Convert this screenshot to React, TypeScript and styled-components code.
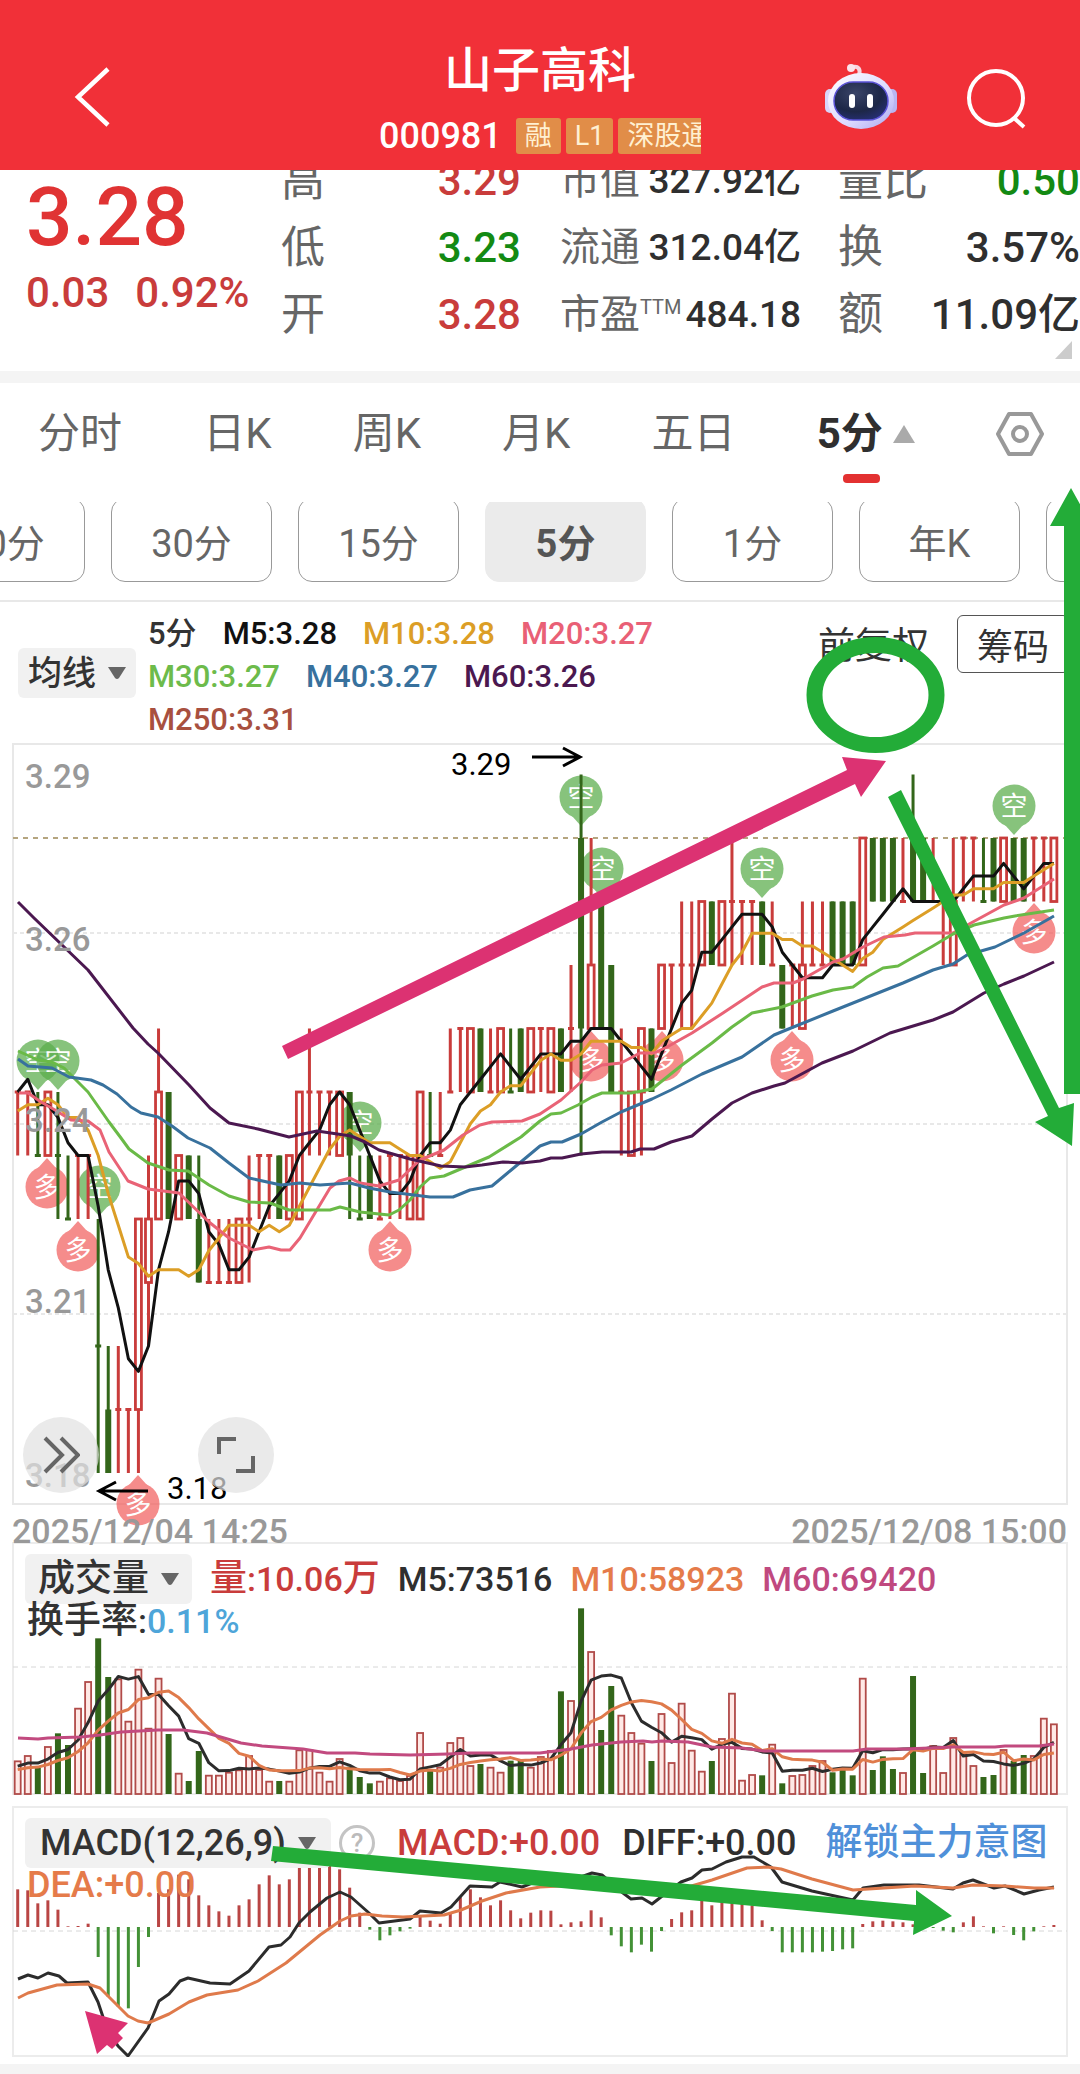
import React from "react";
import styled, { createGlobalStyle } from "styled-components";

const FONT = `Roboto, "Noto Sans CJK SC", sans-serif`;
const RED = "#c93c3b";
const GREEN = "#33661a";
const MARK_GREEN = "#23ac38";
const MARK_PINK = "#dc3272";

const GlobalStyle = createGlobalStyle`
  * { box-sizing: border-box; }
  body { margin: 0; background: #fff; font-family: ${FONT}; color: #333; overflow-x: hidden; }
  button, select { font: inherit; color: inherit; border: 0; padding: 0; margin: 0; background: none; cursor: pointer; }
`;

const Page = styled.div`
  position: relative;
  min-height: 100vh;
  overflow: hidden;
  display: flex;
  flex-direction: column;
  background: #fff;
`;

/* ---------- header ---------- */

const Header = styled.header`
  position: relative;
  z-index: 1;
  height: 170px;
  padding: 42px 52px 0 60px;
  display: grid;
  grid-template-columns: 195px 1fr 203px;
  background: #f13038;
  color: #fff;
`;

const HeaderSide = styled.div<{ $end?: boolean }>`
  display: flex;
  align-items: flex-start;
  justify-content: ${(p) => (p.$end ? "space-between" : "flex-start")};
  padding-top: 20px;
`;

const IconButton = styled.button`
  display: flex;
  align-items: center;
  justify-content: center;
`;

const Heading = styled.div`
  display: flex;
  flex-direction: column;
  align-items: center;
`;

const Title = styled.h1`
  margin: 0;
  font-size: 48px;
  line-height: 58px;
  font-weight: 500;
`;

const CodeLine = styled.div`
  display: flex;
  align-items: center;
  gap: 5px;
  width: 322px;
  margin-top: 12px;
  overflow: hidden;
  white-space: nowrap;
`;

const Code = styled.span`
  margin-right: 9px;
  font-size: 36px;
  line-height: 48px;
  font-weight: 500;
`;

const Tag = styled.span`
  flex: none;
  padding: 0 9px;
  border-radius: 3px;
  background: #e18d48;
  color: #fff0d2;
  font-size: 27px;
  line-height: 36px;
`;

/* ---------- quote ---------- */

const Quote = styled.section`
  position: relative;
  height: 201px;
  display: grid;
  grid-template-columns: 253px 268px 280px 1fr;
  overflow: hidden;
`;

const PriceBlock = styled.div`
  padding-left: 26px;
  color: #e03333;
`;

const Price = styled.div`
  font-size: 82px;
  line-height: 94px;
  font-weight: 500;
`;

const Change = styled.div`
  display: flex;
  gap: 26px;
  margin-top: 4px;
  color: ${RED};
  font-size: 42px;
  line-height: 50px;
  font-weight: 500;
`;

const StatList = styled.dl<{ $pad: number }>`
  margin: -23px 0 0;
  padding-left: ${(p) => p.$pad}px;
`;

const Stat = styled.div`
  height: 67px;
  display: flex;
  align-items: center;
  justify-content: space-between;
  white-space: nowrap;
`;

const StatLabel = styled.dt<{ $size: number }>`
  display: flex;
  color: #666;
  font-size: ${(p) => p.$size}px;
  line-height: 60px;
`;

const StatValue = styled.dd<{ $size: number; $color?: string }>`
  margin: 0;
  color: ${(p) => p.$color || "#2f2f2f"};
  font-size: ${(p) => p.$size}px;
  line-height: 60px;
  font-weight: 500;
`;

const Sup = styled.small`
  font-size: 20px;
  line-height: 44px;
`;

const Corner = styled.svg`
  position: absolute;
  right: 8px;
  bottom: 12px;
`;

const Gap = styled.div`
  height: 12px;
  background: #f4f4f4;
`;

/* ---------- period tabs ---------- */

const Tabs = styled.nav`
  height: 119px;
  padding: 0 36px 0 38px;
  display: flex;
  align-items: flex-start;
  justify-content: space-between;
  color: #666;
  font-size: 42px;
  line-height: 102px;
`;

const Tab = styled.button<{ $active?: boolean }>`
  display: flex;
  align-items: center;
  gap: 10px;
  height: 102px;
  font-weight: ${(p) => (p.$active ? 700 : 400)};
  color: ${(p) => (p.$active ? "#2f2f2f" : "inherit")};
  position: relative;

  &::after {
    content: "";
    display: ${(p) => (p.$active ? "block" : "none")};
    position: absolute;
    left: 26px;
    top: 91px;
    width: 37px;
    height: 9px;
    border-radius: 4px;
    background: #e33131;
  }
`;

const Chips = styled.div`
  height: 100px;
  display: flex;
  gap: 26px;
  overflow: hidden;
  border-bottom: 2px solid #e8e8e8;
`;

const Chip = styled.button<{ $active?: boolean }>`
  flex: none;
  width: 161px;
  height: 84px;
  margin-top: -4px;
  border: 1px solid ${(p) => (p.$active ? "#ebebeb" : "#999")};
  border-radius: 14px;
  background: ${(p) => (p.$active ? "#ebebeb" : "#fff")};
  color: ${(p) => (p.$active ? "#555" : "#666")};
  font-size: 38px;
  font-weight: ${(p) => (p.$active ? 700 : 400)};

  &:first-child { margin-left: -76px; }
`;

/* ---------- indicator bars ---------- */

const Picker = styled.span<{ $size: number; $pad: number }>`
  flex: none;
  display: inline-flex;
  align-items: center;
  gap: 12px;
  height: 50px;
  padding: 0 ${(p) => p.$pad}px;
  border-radius: 6px;
  background: #f1f1f1;
  color: #333;
  font-size: ${(p) => p.$size}px;
  font-weight: 500;

  select {
    appearance: none;
    height: 50px;
    outline: none;
  }
`;

const AverageBar = styled.section`
  height: 141px;
  display: flex;
  align-items: flex-start;
  padding: 10px 11px 0 18px;
`;

const AveragePicker = styled.div`
  padding-top: 36px;
  width: 130px;
`;

const Averages = styled.div`
  width: 550px;
  display: flex;
  flex-wrap: wrap;
  column-gap: 26px;
  font-size: 31px;
  line-height: 43px;
  font-weight: 500;
`;

const AverageActions = styled.div`
  margin-left: auto;
  display: flex;
  align-items: center;
  gap: 28px;
`;

const PlainButton = styled.button`
  font-size: 37px;
  line-height: 58px;
  padding-top: 6px;
`;

const OutlineButton = styled.button`
  width: 112px;
  height: 58px;
  border: 1px solid #555;
  border-radius: 6px;
  font-size: 36px;
`;

const Ink = styled.span<{ $color: string }>`
  color: ${(p) => p.$color};
`;

const Big = styled.span`
  font-size: 37px;
`;

const Panel = styled.section`
  position: relative;
  display: grid;
`;

const Plot = styled.svg`
  grid-area: 1 / 1;
  display: block;
  width: 100%;
  height: auto;
`;

const PanelLegend = styled.div<{ $size: number; $gap: number }>`
  grid-area: 1 / 1;
  position: relative;
  align-self: start;
  display: flex;
  flex-wrap: wrap;
  align-items: center;
  column-gap: ${(p) => p.$gap}px;
  padding: 12px 12px 0 25px;
  font-size: ${(p) => p.$size}px;
  line-height: 50px;
  font-weight: 500;
  white-space: nowrap;
`;

const SecondLine = styled.div`
  flex-basis: 100%;
  line-height: 34px;
  padding-left: 2px;
`;

const Help = styled.button`
  width: 36px;
  height: 36px;
  margin-left: -14px;
  border: 3px solid #c4c4c4;
  border-radius: 50%;
  color: #bbb;
  font-size: 26px;
  line-height: 30px;
`;

const Unlock = styled.a`
  margin-left: 7px;
  color: #4f90d9;
  font-size: 37px;
  text-decoration: none;
`;

const RoundButton = styled.button<{ $left: number }>`
  position: absolute;
  left: ${(p) => p.$left}px;
  bottom: 49px;
  width: 76px;
  height: 76px;
  border-radius: 50%;
  background: rgba(225, 225, 225, 0.7);
  display: flex;
  align-items: center;
  justify-content: center;
`;

const Footer = styled.div`
  flex: 1;
  min-height: 10px;
  margin-top: 7px;
  background: #f4f4f4;
`;

const Drawings = styled.svg`
  position: absolute;
  z-index: 2;
  left: 0;
  top: 0;
  width: 100%;
  pointer-events: none;
`;

/* ---------- data ---------- */

const barX = (i: number) => 17.7 + 10.06 * i;
const levelY = (k: number) => 774.5 + 63.5 * k;

// kind (r hollow / g solid / t red tick / u green tick), then body top, body bottom, high, low; levels in hex, counted down from 3.29
type Candle = [string, number, number, number, number];
const CANDLES: Candle[] = (
  "t5556 t5556 u6656 r5656 u6657 u7767 t6667 t6667 u997B gAB9B " +
  "tAA9B tAAAB r7A7B r7869 r5747 g5757 r6767 g6767 g7868 t8878 " +
  "t8878 t8878 r7878 t7768 t6667 t6667 g6767 r6767 r5757 t5546 " +
  "t5556 t5556 r5656 g5657 u7767 g6767 t7767 t6667 t6667 r6767 " +
  "r5757 u6656 t6656 t5545 t4445 r4545 g4545 t5545 r4545 u5545 " +
  "g4545 r4545 t4445 r4545 g4545 t4435 g1406 r3414 g2424 g3535 " +
  "t5546 r5656 r4546 g4545 r3434 t3334 t3324 t3324 r2323 g2323 " +
  "r2323 t2213 t2223 t2223 g2323 t3323 g3434 t3334 r3424 t3323 " +
  "t3323 g2323 g2323 g2323 r1313 g1212 g1212 g1212 t2212 g1202 " +
  "g1212 t2212 t2223 r2313 t1112 t1112 u2212 g1212 r1212 g1212 " +
  "g1212 t1112 t1112 r1212"
)
  .split(" ")
  .map((c) => {
    const n = (k: number) => parseInt(c[k], 16);
    return [c[0], n(1), n(2), n(3), n(4)];
  });

const close = (c: Candle) => (c[0] === "r" ? c[1] : c[2]);

const VOLUME_TOPS = [
  661, 645, 684, 618, 580, 615, 503, 423, 295, 411, 415, 542, 386, 563, 413, 582, 698, 723, 633, 704,
  704, 695, 688, 645, 687, 722, 723, 722, 628, 628, 695, 722, 654, 680, 711, 730, 722, 712, 720, 705,
  576, 690, 680, 606, 591, 675, 672, 680, 695, 662, 660, 680, 648, 630, 454, 480, 205, 333, 570, 438,
  524, 576, 608, 663, 519, 666, 488, 629, 692, 663, 594, 458, 719, 702, 706, 611, 730, 705, 702, 675,
  660, 697, 685, 706, 413, 690, 649, 687, 696, 408, 699, 615, 696, 591, 640, 675, 711, 705, 627, 663,
  645, 645, 533, 550,
];
const VOLUMES = VOLUME_TOPS.map((t) => (762 - t) / 3);

const MACD = [
  267, 270, 309, 300, 328, 378, 377, 370, 470, 590, 620, 624, 500, 410, 278, 267, 223, 237, 285, 315,
  333, 346, 315, 297, 252, 225, 252, 237, 198, 185, 180, 190, 207, 262, 337, 388, 420, 405, 393, 385,
  350, 361, 370, 337, 291, 267, 291, 315, 300, 330, 354, 337, 330, 331, 372, 366, 363, 330, 351, 405,
  438, 456, 433, 454, 392, 356, 336, 330, 300, 315, 300, 305, 305, 315, 360, 392, 456, 456, 456, 456,
  454, 452, 447, 444, 371, 363, 361, 363, 366, 372, 378, 383, 391, 396, 366, 348, 378, 399, 378, 404,
  420, 393, 378, 374,
].map((v) => (380 - v) / 3);

function average(values: number[], seed: number[], n: number, toY: (v: number) => number) {
  const all = [...seed, ...values];
  return values
    .map((_, i) => {
      const end = seed.length + i + 1;
      const part = all.slice(end - n, end);
      return `${barX(i).toFixed(1)},${toY(part.reduce((a, b) => a + b, 0) / n).toFixed(1)}`;
    })
    .join(" ");
}

const CLOSES = CANDLES.map(close);
const CLOSE_SEED = [6, 6, 6, 5, 5, 6, 4, 5, 5];
const MA5 = average(CLOSES, CLOSE_SEED, 5, levelY);
const MA10 = average(CLOSES, CLOSE_SEED, 10, levelY);
const MA20 =
  "19,1093 28,1093 41,1102 55,1110 71,1120 88,1121 100,1130 109,1152 128,1181 148,1189 179,1193 209,1222 229,1238 253,1250 269,1247 281,1250 290,1250 300,1238 330,1188 339,1181 350,1178 360,1183 379,1186 399,1180 420,1160 444,1150 463,1135 480,1125 492,1122 522,1121 540,1114 561,1100 581,1082 592,1070 602,1065 621,1063 640,1053 654,1053 667,1047 692,1033 723,1013 747,997 762,987 774,983 793,983 803,979 833,962 843,959 863,947 884,937 905,935 915,933 953,933 971,923 1004,905 1024,898 1054,879";
const MA30 =
  "18,1051 38,1060 52,1062 64,1068 88,1092 109,1122 121,1138 129,1149 148,1163 169,1170 188,1171 209,1185 229,1196 249,1202 270,1203 289,1210 330,1210 340,1207 360,1212 389,1215 399,1210 410,1200 420,1187 430,1178 444,1176 470,1165 489,1157 521,1137 540,1121 551,1114 561,1113 578,1105 592,1097 602,1093 631,1093 652,1089 682,1065 712,1043 732,1027 752,1013 782,1007 812,996 833,990 853,987 867,977 883,968 898,966 933,946 953,934 974,925 1004,918 1015,916 1054,910";
const MA40 =
  "18,1059 28,1066 52,1068 69,1077 91,1080 103,1085 117,1094 131,1107 141,1113 158,1117 172,1126 188,1138 210,1148 229,1163 249,1178 281,1185 300,1183 320,1185 350,1183 369,1188 390,1192 430,1197 453,1197 470,1190 492,1186 510,1171 540,1146 551,1142 562,1142 581,1134 602,1122 621,1112 652,1099 671,1090 702,1074 742,1057 774,1035 791,1028 833,1011 853,1003 903,983 933,970 953,964 967,955 995,947 1024,933 1054,916";
const MA60 =
  "18,902 34,918 88,970 133,1028 148,1044 158,1053 189,1085 210,1108 229,1123 258,1129 289,1137 317,1131 351,1136 365,1142 379,1150 410,1159 441,1166 465,1167 482,1165 503,1162 522,1163 540,1161 551,1158 562,1158 581,1154 602,1152 631,1152 640,1149 654,1149 671,1142 692,1136 712,1119 732,1103 752,1093 774,1086 785,1083 822,1063 853,1051 890,1033 933,1020 953,1012 984,993 1004,984 1024,976 1054,962";

const volY = (v: number) => 1794 - v;
const VOL_SEED = [20, 20, 22, 20, 22, 24, 26, 28, 28];
const VMA5 = average(VOLUMES, VOL_SEED, 5, volY);
const VMA10 = average(VOLUMES, VOL_SEED, 10, volY);
const VMA60 =
  "18,1738 38,1739 48,1738 81,1737 100,1735 121,1732 158,1730 183,1730 207,1733 241,1743 262,1746 303,1749 327,1753 355,1753 370,1754 410,1755 448,1754 470,1753 540,1753 571,1749 592,1745 621,1742 643,1741 652,1742 662,1741 688,1742 712,1747 742,1748 764,1751 853,1751 867,1749 905,1749 953,1747 995,1747 1005,1746 1039,1746 1054,1744";

const DIFF =
  "18,1979 28,1975 38,1978 48,1973 59,1976 67,1983 88,1982 93,1992 98,2002 103,2017 110,2033 118,2046 128,2056 148,2028 159,2001 169,1994 180,1981 188,1978 210,1983 230,1984 249,1971 269,1947 281,1945 290,1937 299,1923 310,1912 327,1898 340,1892 351,1897 369,1913 379,1923 410,1919 420,1911 441,1913 451,1907 470,1886 492,1887 500,1882 522,1887 540,1880 561,1880 578,1878 592,1873 602,1875 623,1893 631,1899 642,1898 652,1904 661,1897 681,1882 692,1878 702,1870 712,1869 726,1862 742,1857 754,1857 771,1867 782,1882 812,1891 853,1900 863,1888 884,1885 919,1885 953,1889 963,1883 973,1880 994,1888 1005,1886 1024,1894 1039,1890 1054,1887";
const DEA =
  "18,1998 28,1993 57,1985 88,1984 100,1988 128,2016 138,2021 148,2023 169,2014 189,2002 207,1995 238,1990 258,1981 286,1963 320,1935 340,1921 351,1916 365,1914 382,1916 403,1917 444,1915 461,1910 482,1901 506,1893 540,1887 581,1885 643,1890 688,1887 712,1880 747,1868 767,1867 781,1869 812,1879 853,1890 884,1888 915,1886 953,1888 973,1885 1005,1886 1034,1888 1054,1888";

const SHORTS: [number, number][] = [[38, 1061], [58, 1061], [99, 1187], [360, 1123], [581, 797], [602, 869], [762, 869], [1014, 806]];
const LONGS: [number, number][] = [[47, 1187], [78, 1250], [138, 1504], [390, 1250], [591, 1060], [662, 1060], [792, 1060], [1034, 932]];

/* ---------- drawings ---------- */

const Down = () => (
  <svg width="18" height="13" viewBox="0 0 18 13" aria-hidden="true"><path d="M0 0H18L11 11Q9 13 7 11Z" fill="#666" /></svg>
);

function Marker({ x, y, up }: { x: number; y: number; up?: boolean }) {
  const tip = up ? `M${x - 9} ${y - 19}L${x} ${y - 29}L${x + 9} ${y - 19}Z` : `M${x - 9} ${y + 19}L${x} ${y + 29}L${x + 9} ${y + 19}Z`;
  return (
    <g fill={up ? "#f2605f" : "#5aad4b"} opacity="0.72">
      <circle cx={x} cy={y} r="21.5" />
      <path d={tip} />
      <text x={x} y={y + 10} fontSize="27" fill="#fff" textAnchor="middle">{up ? "多" : "空"}</text>
    </g>
  );
}

function CandleMark({ c, i }: { c: Candle; i: number }) {
  const [kind, top, bottom, high, low] = c;
  const x = barX(i);
  const color = kind === "g" || kind === "u" ? GREEN : RED;
  const a = levelY(top);
  const b = levelY(bottom);
  return (
    <g stroke={color} fill={color} strokeWidth="3">
      {kind === "r" ? (
        <>
          {high < top && <path d={`M${x} ${levelY(high)}V${a}`} />}
          {low > bottom && <path d={`M${x} ${b}V${levelY(low)}`} />}
          <rect x={x - 3} y={a} width="6" height={b - a} fill="#fff" strokeWidth="2.8" />
        </>
      ) : kind === "g" ? (
        <>
          <path d={`M${x} ${levelY(high)}V${levelY(low)}`} />
          <rect x={x - 3} y={a} width="6" height={b - a} stroke="none" />
        </>
      ) : (
        <path d={`M${x} ${levelY(high)}V${levelY(low)}M${x - 3} ${a}H${x + 3}`} />
      )}
    </g>
  );
}

function Line({ points, color }: { points: string; color: string }) {
  return <polyline points={points} fill="none" stroke={color} strokeWidth="3" strokeLinejoin="round" />;
}

const PriceChart = () => (
  <Plot viewBox="0 743 1080 799" fontFamily={FONT}>
    <g fill="none" stroke="#e8e8e8" strokeWidth="2">
      <path d="M13 744H1067V1504H13Z" />
      <path d="M13 933H1067M13 1124H1067M13 1314H1067" strokeDasharray="4 3" />
    </g>
    <path d="M13 838H1064" stroke="#b5a57f" strokeWidth="2" strokeDasharray="5 5" />
    {SHORTS.map(([x, y]) => <Marker key={`${x}`} x={x} y={y} />)}
    {LONGS.map(([x, y]) => <Marker key={`${x}`} x={x} y={y} up />)}
    {CANDLES.map((c, i) => <CandleMark key={i} c={c} i={i} />)}
    <Line points={MA5} color="#111" />
    <Line points={MA10} color="#dc9e26" />
    <Line points={MA20} color="#e96376" />
    <Line points={MA30} color="#6aba47" />
    <Line points={MA40} color="#38719d" />
    <Line points={MA60} color="#4b1850" />
    <g fill="#999" fontSize="33" fontWeight="500">
      <text x="25" y="788">3.29</text>
      <text x="25" y="951">3.26</text>
      <text x="25" y="1132">3.24</text>
      <text x="25" y="1313">3.21</text>
      <text x="25" y="1487">3.18</text>
    </g>
    <g fill="#000" fontSize="31">
      <text x="451" y="775">3.29</text>
      <text x="167" y="1499">3.18</text>
    </g>
    <g fill="none" stroke="#000" strokeWidth="3">
      <path d="M532 757H580M563 748L580 757L563 766" />
      <path d="M148 1491H99M116 1482L99 1491L116 1500" />
    </g>
  </Plot>
);

const DateRow = styled.div`
  position: absolute;
  z-index: 1;
  left: 12px;
  right: 13px;
  bottom: -9px;
  display: flex;
  justify-content: space-between;
  color: #999;
  font-size: 34px;
  line-height: 40px;
  font-weight: 500;
`;

const VolumeChart = () => (
  <Plot viewBox="0 1542 1080 264">
    <path d="M13 1543H1067V1794H13Z" fill="none" stroke="#ececec" strokeWidth="2" />
    <path d="M13 1667H1067" stroke="#d6d6d6" strokeWidth="1" strokeDasharray="5 4" />
    {VOLUMES.map((v, i) => {
      const green = "gu".includes(CANDLES[i][0]);
      return green ? (
        <rect key={i} x={barX(i) - 3} y={volY(v)} width="6" height={v} fill={GREEN} />
      ) : (
        <rect key={i} x={barX(i) - 3} y={volY(v) + 1} width="6" height={v - 1} fill="#ffe9e6" stroke="#b14b49" strokeWidth="1.8" />
      );
    })}
    <Line points={VMA5} color="#2c2c2c" />
    <Line points={VMA10} color="#df7a4b" />
    <Line points={VMA60} color="#c24a7f" />
  </Plot>
);

const MacdChart = () => (
  <Plot viewBox="0 1806 1080 251">
    <path d="M13 1807H1067V2056H13Z" fill="none" stroke="#ececec" strokeWidth="2" />
    <path d="M13 1931H1067" stroke="#d6d6d6" strokeWidth="1" strokeDasharray="5 4" />
    {MACD.map((v, i) => (
      <path key={i} d={`M${barX(i)} 1927V${1927 - v}`} stroke={v > 0 ? "#b94544" : "#439136"} strokeWidth="3" />
    ))}
    <Line points={DIFF} color="#2c2c2c" />
    <Line points={DEA} color="#df7a4b" />
  </Plot>
);

const Robot = () => (
  <svg width="72" height="68" viewBox="0 0 72 68" aria-hidden="true">
    <defs>
      <linearGradient id="shell" x1="0" y1="0" x2="1" y2="1">
        <stop offset="0" stopColor="#ffffff" />
        <stop offset="0.6" stopColor="#dcd9ff" />
        <stop offset="1" stopColor="#a9a6ee" />
      </linearGradient>
      <radialGradient id="face" cx="0.4" cy="0.3" r="0.8">
        <stop offset="0" stopColor="#3a4468" />
        <stop offset="0.6" stopColor="#1d2747" />
        <stop offset="1" stopColor="#27307a" />
      </radialGradient>
    </defs>
    <path d="M34 13C36 7 33 4 28 5" fill="none" stroke="#f7d7e2" strokeWidth="4" strokeLinecap="round" />
    <circle cx="26" cy="6" r="4" fill="#fbe4ec" />
    <rect x="0" y="27" width="10" height="24" rx="5" fill="#d9d5fa" />
    <rect x="62" y="27" width="10" height="24" rx="5" fill="#b9b5f2" />
    <ellipse cx="36" cy="39" rx="33" ry="28" fill="url(#shell)" />
    <rect x="9" y="20" width="54" height="38" rx="19" fill="url(#face)" stroke="#5a52d6" strokeWidth="1.5" />
    <rect x="24" y="32" width="6" height="14" rx="3" fill="#fff" />
    <rect x="42" y="32" width="6" height="14" rx="3" fill="#fff" />
  </svg>
);

function Annotations() {
  return (
    <Drawings viewBox="0 0 1080 2074" aria-hidden="true">
      <ellipse cx="875.5" cy="695" rx="61" ry="50" fill="none" stroke={MARK_GREEN} strokeWidth="16" />
      <polygon points="282,1046 847,770 842,757 886,761 861,797 855,784 288,1059" fill={MARK_PINK} />
      <polygon points="888,797 901,790 1059,1108 1074,1103 1072,1146 1035,1122 1048,1116" fill={MARK_GREEN} />
      <polygon points="1071,488 1092,526 1080,526 1080,1094 1064,1094 1064,526 1050,526" fill={MARK_GREEN} />
      <polygon points="273,1846 916,1905 916,1890 952,1916 913,1935 914,1921 271,1861" fill={MARK_GREEN} />
      <polygon points="85,2011 128,2023 118,2033 123,2038 112,2049 107,2045 97,2054" fill={MARK_PINK} />
    </Drawings>
  );
}

type Row = { label: React.ReactNode; value: string; color?: string };

function Stats({ rows, label, value, pad }: { rows: Row[]; label: number; value: number; pad: number }) {
  return (
    <StatList $pad={pad}>
      {rows.map((r) => (
        <Stat key={r.value}>
          <StatLabel $size={label}>{r.label}</StatLabel>
          <StatValue $size={value} $color={r.color}>{r.value}</StatValue>
        </Stat>
      ))}
    </StatList>
  );
}

function Choice({ name, value, size, pad }: { name: string; value: string; size: number; pad: number }) {
  return (
    <Picker $size={size} $pad={pad}>
      <select aria-label={name} defaultValue={value}>
        <option>{value}</option>
      </select>
      <Down />
    </Picker>
  );
}

const AVERAGES: [string, string][] = [
  ["5分", "#333"],
  ["M5:3.28", "#111"],
  ["M10:3.28", "#dc9e26"],
  ["M20:3.27", "#e96076"],
  ["M30:3.27", "#6dbb4b"],
  ["M40:3.27", "#38719d"],
  ["M60:3.26", "#4b1850"],
  ["M250:3.31", "#a8503f"],
];

export default function App() {
  return (
    <Page>
      <GlobalStyle />
      <Header>
        <HeaderSide>
          <IconButton aria-label="返回">
            <svg width="64" height="70" viewBox="0 0 64 70" fill="none" stroke="#fff" strokeWidth="4.5">
              <path d="M48 7L18 35L48 63" />
            </svg>
          </IconButton>
        </HeaderSide>
        <Heading>
          <Title>山子高科</Title>
          <CodeLine>
            <Code>000981</Code>
            <Tag>融</Tag>
            <Tag>L1</Tag>
            <Tag>深股通</Tag>
          </CodeLine>
        </Heading>
        <HeaderSide $end>
          <IconButton aria-label="助手"><Robot /></IconButton>
          <IconButton aria-label="搜索">
            <svg width="64" height="74" viewBox="0 0 64 74" fill="none" stroke="#fff" strokeWidth="4">
              <circle cx="32" cy="36" r="27" />
              <path d="M50 56L60 65" />
            </svg>
          </IconButton>
        </HeaderSide>
      </Header>

      <Quote>
        <PriceBlock>
          <Price>3.28</Price>
          <Change><span>0.03</span><span>0.92%</span></Change>
        </PriceBlock>
        <Stats
          pad={28} label={44} value={42}
          rows={[
            { label: "高", value: "3.29", color: RED },
            { label: "低", value: "3.23", color: "#138a13" },
            { label: "开", value: "3.28", color: RED },
          ]}
        />
        <Stats
          pad={39} label={40} value={37}
          rows={[
            { label: "市值", value: "327.92亿" },
            { label: "流通", value: "312.04亿" },
            { label: <>市盈<Sup>TTM</Sup></>, value: "484.18" },
          ]}
        />
        <Stats
          pad={37} label={45} value={42}
          rows={[
            { label: "量比", value: "0.50", color: "#138a13" },
            { label: "换", value: "3.57%" },
            { label: "额", value: "11.09亿" },
          ]}
        />
        <Corner width="17" height="18" viewBox="0 0 17 18" aria-hidden="true"><path d="M17 0V18H0Z" fill="#ccc" /></Corner>
      </Quote>
      <Gap />

      <Tabs>
        <Tab>分时</Tab>
        <Tab>日K</Tab>
        <Tab>周K</Tab>
        <Tab>月K</Tab>
        <Tab>五日</Tab>
        <Tab $active>
          5分
          <svg width="22" height="18" viewBox="0 0 22 18" aria-hidden="true"><path d="M11 0L22 18H0Z" fill="#aaa" /></svg>
        </Tab>
        <Tab aria-label="设置">
          <svg width="48" height="46" viewBox="0 0 48 46" fill="none" stroke="#999" strokeWidth="4" strokeLinejoin="round">
            <path d="M13 3H35L46 23L35 43H13L2 23Z" />
            <circle cx="24" cy="23" r="7" />
          </svg>
        </Tab>
      </Tabs>
      <Chips>
        <Chip>60分</Chip>
        <Chip>30分</Chip>
        <Chip>15分</Chip>
        <Chip $active>5分</Chip>
        <Chip>1分</Chip>
        <Chip>年K</Chip>
        <Chip aria-label="更多" />
      </Chips>

      <AverageBar>
        <AveragePicker><Choice name="均线" value="均线" size={34} pad={10} /></AveragePicker>
        <Averages>
          {AVERAGES.map(([t, c]) => <Ink key={t} $color={c}>{t}</Ink>)}
        </Averages>
        <AverageActions>
          <PlainButton>前复权</PlainButton>
          <OutlineButton>筹码</OutlineButton>
        </AverageActions>
      </AverageBar>

      <Panel>
        <PriceChart />
        <RoundButton $left={23} aria-label="展开">
          <svg width="38" height="38" viewBox="0 0 38 38" fill="none" stroke="#666" strokeWidth="4">
            <path d="M3 2L20 19L3 36M19 2L36 19L19 36" />
          </svg>
        </RoundButton>
        <RoundButton $left={198} aria-label="全屏">
          <svg width="40" height="38" viewBox="0 0 40 38" fill="none" stroke="#666" strokeWidth="4">
            <path d="M3 18V3H20M37 20V35H20" />
          </svg>
        </RoundButton>
        <DateRow><span>2025/12/04 14:25</span><span>2025/12/08 15:00</span></DateRow>
      </Panel>

      <Panel>
        <VolumeChart />
        <PanelLegend $size={34} $gap={18}>
          <Choice name="成交量" value="成交量" size={37} pad={13} />
          <Ink $color={RED}><Big>量</Big>:10.06<Big>万</Big></Ink>
          <Ink $color="#2f2f2f">M5:73516</Ink>
          <Ink $color="#e57b4a">M10:58923</Ink>
          <Ink $color="#c0497f">M60:69420</Ink>
          <SecondLine><Big>换手率</Big>:<Ink $color="#4ea5d9">0.11%</Ink></SecondLine>
        </PanelLegend>
      </Panel>

      <Panel>
        <MacdChart />
        <PanelLegend $size={36} $gap={22}>
          <Choice name="MACD" value="MACD(12,26,9)" size={36} pad={15} />
          <Help>?</Help>
          <Ink $color={RED}>MACD:+0.00</Ink>
          <Ink $color="#2f2f2f">DIFF:+0.00</Ink>
          <Unlock href="#intent">解锁主力意图</Unlock>
          <SecondLine><Ink $color="#e57b4a">DEA:+0.00</Ink></SecondLine>
        </PanelLegend>
      </Panel>
      <Footer />
      <Annotations />
    </Page>
  );
}
